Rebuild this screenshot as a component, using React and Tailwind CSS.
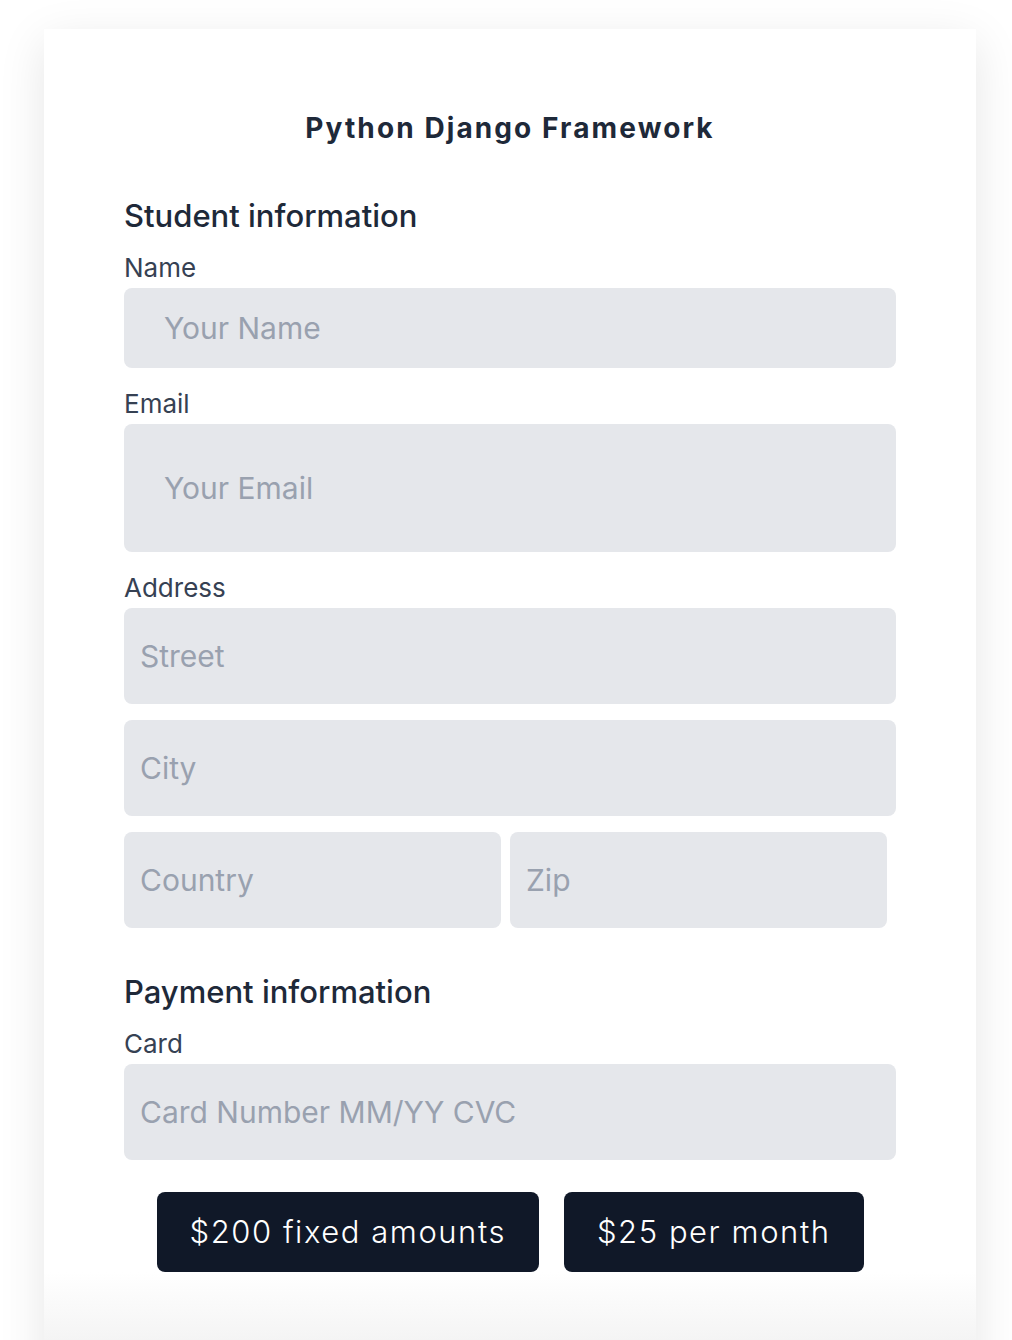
import React from 'react';

const font = { fontFamily: 'Inter, "Noto Sans", sans-serif' };

function Label({ children }) {
  return <label className="block h-8 mb-1 text-[26px] leading-8 text-gray-700">{children}</label>;
}

function Field({ placeholder, className = '' }) {
  return (
    <input
      type="text"
      placeholder={placeholder}
      className={`block bg-gray-200 rounded-lg text-[30px] text-gray-700 placeholder:text-gray-400 outline-none ${className}`}
    />
  );
}

export default function App() {
  return (
    <div className="min-h-screen bg-white pt-[29px] overflow-hidden" style={font}>
      <div className="ml-11 w-[932px] bg-white shadow-[0_12px_44px_rgba(0,0,0,0.1)]">
        <div className="px-20 pt-[83px]">
          <h1 className="text-center text-[28px] leading-8 font-bold tracking-[0.075em] text-gray-800">Python Django Framework</h1>

          <h2 className="mt-[52px] text-[31px] leading-10 font-medium text-gray-800">Student information</h2>

          <div className="mt-4">
            <Label>Name</Label>
            <Field placeholder="Your Name" className="w-full h-20 px-10" />
          </div>

          <div className="mt-5">
            <Label>Email</Label>
            <Field placeholder="Your Email" className="w-full h-32 px-10" />
          </div>

          <div className="mt-5">
            <Label>Address</Label>
            <div className="flex flex-col gap-4">
              <Field placeholder="Street" className="w-full h-24 px-4" />
              <Field placeholder="City" className="w-full h-24 px-4" />
              <div className="flex gap-[9px]">
                <Field placeholder="Country" className="w-[377px] h-24 px-4" />
                <Field placeholder="Zip" className="w-[377px] h-24 px-4" />
              </div>
            </div>
          </div>

          <h2 className="mt-[44px] text-[31px] leading-10 font-medium text-gray-800">Payment information</h2>

          <div className="mt-4">
            <Label>Card</Label>
            <Field placeholder="Card Number MM/YY CVC" className="w-full h-24 px-4" />
          </div>

          <div className="mt-8 flex justify-center gap-[25px]">
            <button className="h-20 px-[33px] rounded-lg bg-gray-900 text-white text-[31px] font-light tracking-[0.05em]">$200 fixed amounts</button>
            <button className="h-20 px-[33px] rounded-lg bg-gray-900 text-white text-[31px] font-light tracking-[0.05em]">$25 per month</button>
          </div>
        </div>
        <div className="h-[120px] bg-gradient-to-b from-white to-[#ececec]" />
      </div>
    </div>
  );
}
